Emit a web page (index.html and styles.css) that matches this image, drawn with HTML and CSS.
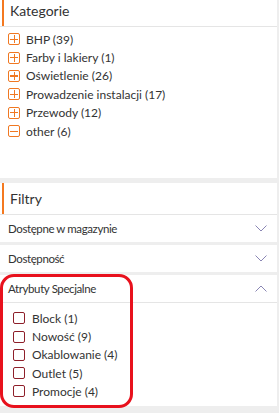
FILE: index.html
```html
<!DOCTYPE html>
<html lang="pl">
<head>
    <meta charset="UTF-8">
    <meta name="viewport" content="width=device-width, initial-scale=1.0">
    <title>Kategorie i filtry</title>
    <link rel="stylesheet" href="styles.css">
</head>
<body>

    <div class="sidebar">

        <!-- Kategorie -->
        <div class="block block-categories">
            <div class="block-title"><span>Kategorie</span></div>
            <ul class="cat-list">
                <li><span class="toggle plus"></span>BHP (39)</li>
                <li><span class="toggle plus"></span>Farby i lakiery (1)</li>
                <li><span class="toggle plus"></span>Oświetlenie (26)</li>
                <li><span class="toggle plus"></span>Prowadzenie instalacji (17)</li>
                <li><span class="toggle plus"></span>Przewody (12)</li>
                <li><span class="toggle minus"></span>other (6)</li>
            </ul>
        </div>

        <!-- Filtry -->
        <div class="block block-filters">
            <div class="block-title"><span>Filtry</span></div>

            <div class="filter">
                <div class="filter-head">
                    Dostępne w magazynie
                    <svg class="chevron" width="12" height="7" viewBox="0 0 12 7"><polyline points="0.5,0.5 6,6 11.5,0.5"/></svg>
                </div>
            </div>

            <div class="filter">
                <div class="filter-head">
                    Dostępność
                    <svg class="chevron" width="12" height="7" viewBox="0 0 12 7"><polyline points="0.5,0.5 6,6 11.5,0.5"/></svg>
                </div>
            </div>

            <div class="filter open">
                <div class="filter-head">
                    Atrybuty Specjalne
                    <svg class="chevron" width="12" height="7" viewBox="0 0 12 7"><polyline points="0.5,6.5 6,1 11.5,6.5"/></svg>
                </div>
                <ul class="check-list">
                    <li><span class="box"></span>Block (1)</li>
                    <li><span class="box"></span>Nowość (9)</li>
                    <li><span class="box"></span>Okablowanie (4)</li>
                    <li><span class="box"></span>Outlet (5)</li>
                    <li><span class="box"></span>Promocje (4)</li>
                </ul>
            </div>
        </div>

        <!-- red marker drawn over the screenshot -->
        <div class="highlight"></div>
    </div>

</body>
</html>
```

FILE: styles.css
```css
body {
    margin: 0;
    background-color: #eeeeee;
    font-family: Lato, "Open Sans", sans-serif;
    color: #333;
}
ul {
    list-style: none;
    margin: 0;
    padding: 0;
}
.sidebar {
    position: relative;
    width: 277px;
    margin-top: -5px;
}
.block {
    background-color: #fff;
    margin-bottom: 5px;
}
.block-title {
    height: 31px;
    border-bottom: 1px solid #e5e5e5;
    padding-left: 2px;
    display: flex;
}
.block-title span {
    flex: 1;
    border-left: 2px solid #f47920;
    padding-left: 6px;
    font-size: 14px;
    line-height: 31px;
}

/* Kategorie */
.cat-list {
    padding: 3px 0 38px 8px;
}
.cat-list li {
    display: flex;
    align-items: center;
    height: 18.4px;
    font-size: 12px;
}
.toggle {
    position: relative;
    width: 10px;
    height: 10px;
    border: 1.2px solid #f07822;
    border-radius: 2px;
    margin-right: 6px;
}
.toggle::before,
.toggle.plus::after {
    content: "";
    position: absolute;
    background: #f07822;
}
.toggle::before {
    left: 1px;
    right: 1px;
    top: 4.5px;
    height: 1.2px;
}
.toggle.plus::after {
    top: 1px;
    bottom: 1px;
    left: 4.5px;
    width: 1.2px;
}

/* Filtry */
.block-filters {
    background-color: transparent;
}
.block-filters .block-title {
    background-color: #fff;
}
.filter {
    background-color: #fff;
    margin-bottom: 3px;
}
.filter-head {
    display: flex;
    align-items: center;
    justify-content: space-between;
    height: 27px;
    padding: 0 10px 0 8px;
    font-size: 11.5px;
    letter-spacing: -0.4px;
}
.chevron {
    fill: none;
    stroke: #8a86b4;
    stroke-width: 1;
}
.filter.open .filter-head {
    border-bottom: 1px solid #e5e5e5;
}
.check-list {
    padding: 6px 0 5px 13px;
}
.check-list li {
    display: flex;
    align-items: center;
    height: 18.25px;
    font-size: 12px;
}
.box {
    width: 10px;
    height: 10px;
    border: 1px solid #8e1f2a;
    border-radius: 2px;
    margin-right: 7px;
}

.highlight {
    position: absolute;
    left: 0;
    top: 279px;
    width: 127px;
    height: 128px;
    border: 3px solid #e8111d;
    border-radius: 14px;
}
```
